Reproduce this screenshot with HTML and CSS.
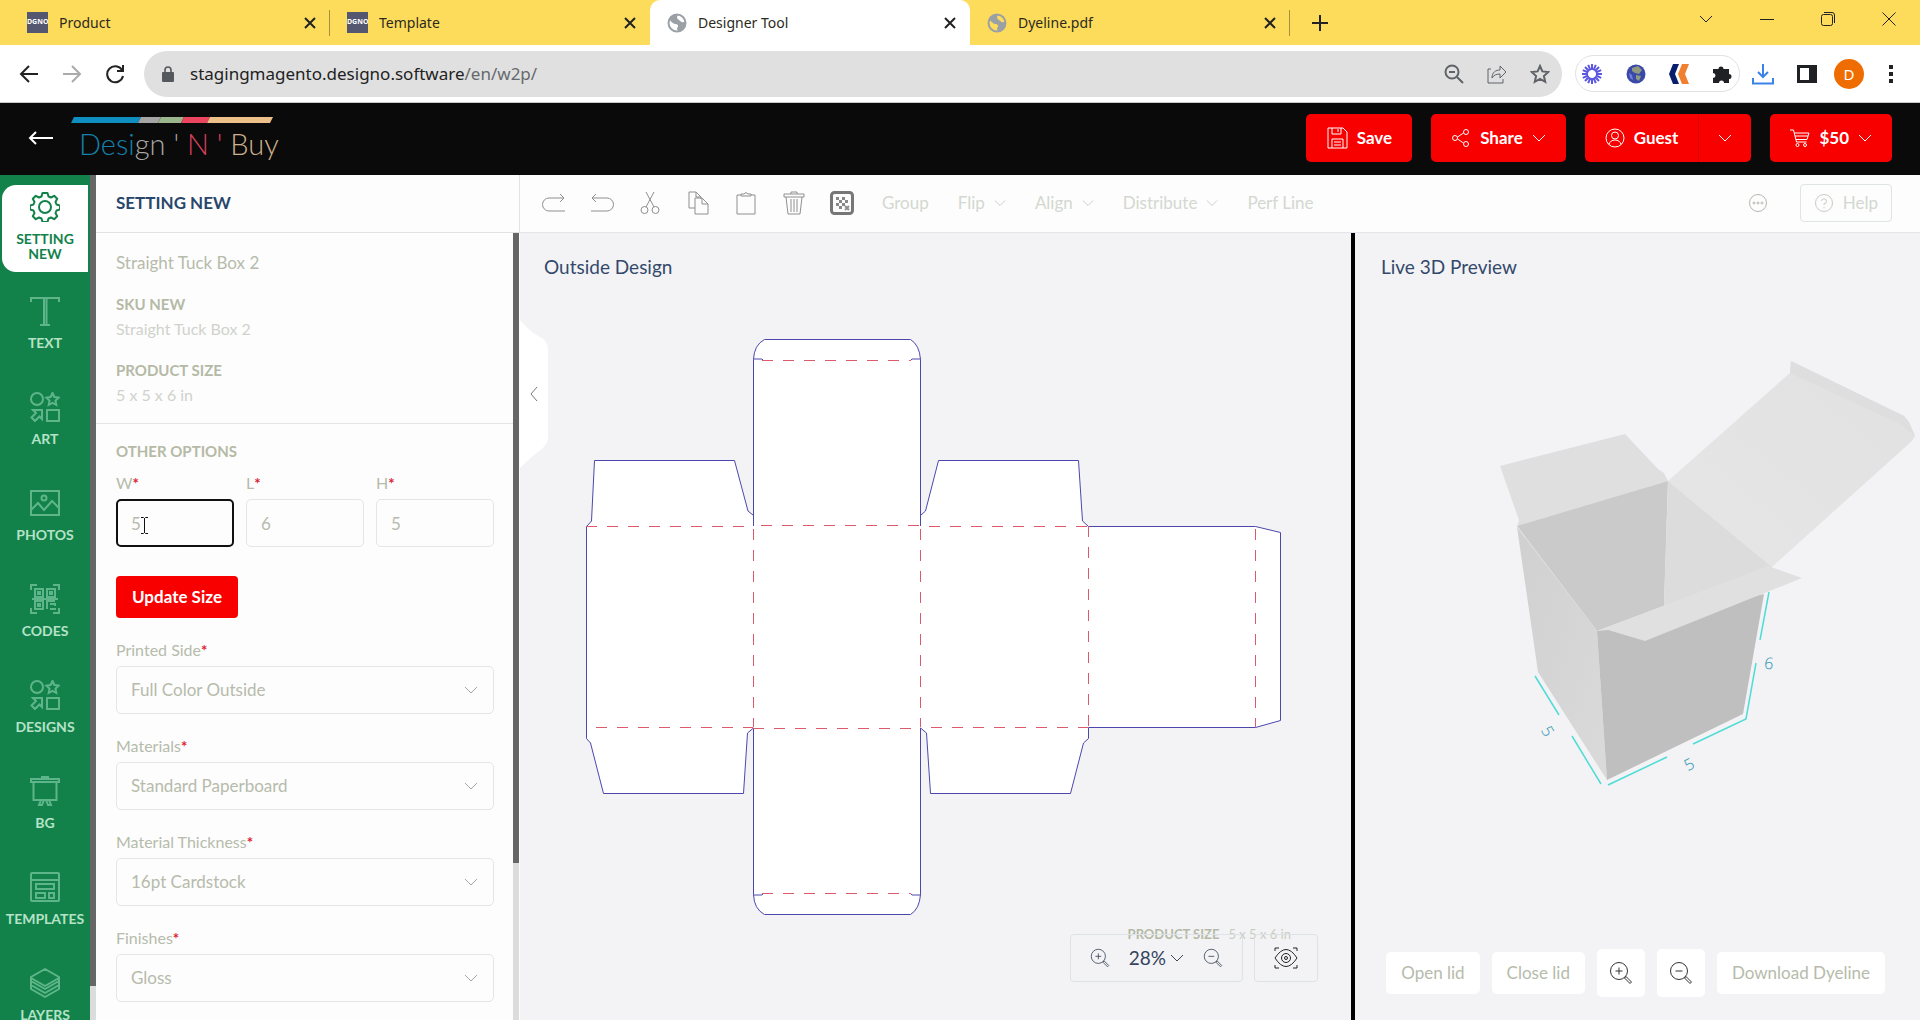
FILE: index.html
```html
<!DOCTYPE html>
<html lang="en">
<head>
<meta charset="utf-8">
<title>Designer Tool</title>
<link rel="stylesheet" href="styles.css">
</head>
<body>
<svg class="defs" aria-hidden="true">
  <symbol id="chev" viewBox="0 0 14 14"><path d="M1 4l6 6 6-6"/></symbol>
  <symbol id="cross" viewBox="0 0 14 14"><path d="M2 2l10 10M12 2L2 12"/></symbol>
  <symbol id="globe" viewBox="0 0 20 20"><circle cx="10" cy="10" r="8.500" fill="none" stroke="#9aa0a6" stroke-width="2"/><path d="M2 6C5 1 9 1 12 1.500 9 3 10 6 12 7s2 3 5 2 2 3 1 5l-3 4c-3 1-5 0-5-3 2-1 1-4-1-4s-4-1-7-5z" fill="#9aa0a6" stroke="none"/></symbol>
  <symbol id="shapes" viewBox="0 0 30 30"><circle cx="7" cy="7" r="6"/><path d="M22.500 1l1.900 4 4.200.600-3.100 3 .800 4.200-3.800-2-3.800 2 .800-4.200-3.100-3 4.200-.600zM17 18h12v11H17zM3 18h9v9l-2.500-2.500L5 29l-3.500-3.500L6 21z"/></symbol>
  <symbol id="zin" viewBox="0 0 24 24"><circle cx="10" cy="10" r="8.500"/><path d="M10 6.500v7M6.500 10h7M15.500 17l1.500-1.500 5.500 5.500-1.500 1.500z"/></symbol>
  <symbol id="zout" viewBox="0 0 24 24"><circle cx="10" cy="10" r="8.500"/><path d="M6.500 10h7M15.500 17l1.500-1.500 5.500 5.500-1.500 1.500z"/></symbol>
</svg>

<div class="app">
  <nav class="tabs" aria-label="Tabs">
    <div class="tab"><span class="fav">DGNO</span><span class="tab-name">Product</span><button class="bare" aria-label="Close tab"><svg class="i14 bold"><use href="#cross"/></svg></button></div>
    <div class="tab"><span class="fav">DGNO</span><span class="tab-name">Template</span><button class="bare" aria-label="Close tab"><svg class="i14 bold"><use href="#cross"/></svg></button></div>
    <div class="tab active"><svg class="i20"><use href="#globe"/></svg><span class="tab-name">Designer Tool</span><button class="bare" aria-label="Close tab"><svg class="i14 bold"><use href="#cross"/></svg></button></div>
    <div class="tab"><svg class="i20"><use href="#globe"/></svg><span class="tab-name">Dyeline.pdf</span><button class="bare" aria-label="Close tab"><svg class="i14 bold"><use href="#cross"/></svg></button></div>
    <button class="bare new-tab" aria-label="New tab"><svg class="i20 bold" viewBox="0 0 20 20"><path d="M10 2v16M2 10h16"/></svg></button>
    <div class="win">
      <button class="bare" aria-label="Search tabs"><svg class="i14"><use href="#chev"/></svg></button>
      <button class="bare" aria-label="Minimize"><svg class="i14" viewBox="0 0 14 14"><path d="M0 7.500h14"/></svg></button>
      <button class="bare" aria-label="Restore"><svg class="i14" viewBox="0 0 14 14"><rect x=".500" y="2.500" width="11" height="11" rx="2"/><path d="M3 .500h8q2.500 0 2.500 2.500v8"/></svg></button>
      <button class="bare" aria-label="Close"><svg class="i14" viewBox="0 0 14 14"><path d="M.500.500l13 13M13.500.500l-13 13"/></svg></button>
    </div>
  </nav>

  <div class="bar">
    <button class="bare" aria-label="Back"><svg class="i20 mid" viewBox="0 0 20 20"><path d="M19 10H2M10 2l-8 8 8 8"/></svg></button>
    <button class="bare fwd" aria-label="Forward"><svg class="i20 mid" viewBox="0 0 20 20"><path d="M1 10h17M10 2l8 8-8 8"/></svg></button>
    <button class="bare" aria-label="Reload"><svg class="i20 bold" viewBox="0 0 20 20"><path d="M17 6a8 8 0 1 0 1 6M18 1v6h-6"/></svg></button>
    <div class="omni">
      <svg class="lock" viewBox="0 0 12 16"><rect y="6" width="12" height="10" rx="1" fill="#55585c" stroke="none"/><path d="M3 7V4a3 3 0 0 1 6 0v3" stroke="#55585c" stroke-width="1.600"/></svg>
      <span class="url">stagingmagento.designo.software<span class="path">/en/w2p/</span></span>
      <svg class="i20 mid" viewBox="0 0 20 20"><circle cx="8" cy="8" r="6.500"/><path d="M5 8h6M13 13l6 6"/></svg>
      <svg class="i20 share" viewBox="0 0 20 20"><path d="M4 5H1v14h15v-4M5 14c0-6 4-8 8-8V2l6 6-6 6v-4c-4 0-6 1-8 4z"/></svg>
      <svg class="i20 mid" viewBox="0 0 20 20"><path d="M10 2l2.400 5.400 5.900.600-4.400 4 1.300 5.800-5.200-3-5.200 3L6.100 12 1.700 8l5.900-.600z"/></svg>
    </div>
    <div class="ext">
      <svg class="i22" viewBox="0 0 22 22" stroke="#5b57e0" stroke-width="2"><path d="M11 1v6M11 15v6M1 11h6M15 11h6M4 4l4.200 4.200M13.800 13.800L18 18M18 4l-4.200 4.200M8.200 13.800L4 18M7.200 1.800l2.300 5.500M12.500 14.700l2.300 5.500M14.800 1.800l-2.300 5.500M9.500 14.700l-2.300 5.500M1.800 7.200l5.500 2.300M14.700 12.500l5.500 2.300M1.800 14.800l5.500-2.300M14.700 9.500l5.500-2.300"/></svg>
      <svg class="i20" viewBox="0 0 20 20" stroke="none"><circle cx="10" cy="10" r="9.500" fill="#3a48a8"/><path d="M6 4l6-2 4 4-3 4-4-1-3-2zM10 11l5 1-2 5-3-2z" fill="#8f9a80"/><path d="M3 9l3 2 1 5-3-2z" fill="#6f80e0"/></svg>
      <svg class="i20" viewBox="0 0 20 20" stroke="none"><path d="M4 0h6L6 10l4 10H4L0 10z" fill="#0a1f6b"/><path d="M13 0h7l-4 10 4 10h-7L9 10z" fill="#f08030"/></svg>
      <svg class="i20" viewBox="0 0 20 20" stroke="none"><path d="M1 5h5.500a2.500 2.500 0 1 1 5 0H17v5a2.500 2.500 0 1 1 0 5V19h-5a2.500 2.500 0 0 0-5 0H1v-5a2.500 2.500 0 0 0 0-5z" fill="#202124"/></svg>
    </div>
    <svg class="i22 bold" viewBox="0 0 22 22" stroke="#3b83e8"><path d="M11 1v13M6 9l5 5 5-5M1 15v5.500h20V15"/></svg>
    <svg class="i20" viewBox="0 0 20 20" stroke="none"><path d="M0 1h20v18H0zM3 4v12h9V4z" fill="#202124" fill-rule="evenodd"/></svg>
    <span class="avatar">D</span>
    <button class="bare" aria-label="Menu"><svg class="dots" viewBox="0 0 4 18" stroke="none"><path d="M0 0h4v4H0zM0 7h4v4H0zM0 14h4v4H0z" fill="#222"/></svg></button>
  </div>

  <header class="top">
    <a href="#" class="back" aria-label="Back"><svg class="i26" viewBox="0 0 26 26"><path d="M25 13H2M8 7l-6 6 6 6"/></svg></a>
    <div class="logo">
      <svg class="stripe" viewBox="0 0 202 6" stroke="none"><path d="M3 0h67l-3 6H0z" fill="#0e8fc0"/><path d="M70 0h20l-3 6H67z" fill="#a5a5a5"/><path d="M90 0h23l-3 6H87z" fill="#9bb58c"/><path d="M113 0h26l-3 6h-26z" fill="#ec4560"/><path d="M139 0h63l-3 6h-63z" fill="#edc08a"/></svg>
      <div class="brand"><span class="c1">Desi</span><span class="c2">gn</span> <span class="c2">'</span> <span class="c3">N</span> <span class="c3">'</span> <span class="c4">Buy</span></div>
    </div>
    <div class="acts">
      <button class="red"><svg class="i22" viewBox="0 0 22 22"><path d="M2 1h15l4 4v16H2zM6 1v6h9V1M6 21v-9h11v9M8 15h7M8 18h7M12 2v3"/></svg>Save</button>
      <button class="red"><svg class="i20" viewBox="0 0 20 20"><circle cx="4" cy="10" r="2.500"/><circle cx="15" cy="4" r="2.500"/><circle cx="15" cy="16" r="2.500"/><path d="M6.500 9l6-4M6.500 11l6 4"/></svg>Share<svg class="i14"><use href="#chev"/></svg></button>
      <div class="split"><button class="red"><svg class="i20" viewBox="0 0 20 20"><circle cx="10" cy="10" r="9"/><circle cx="10" cy="7.500" r="3.500"/><path d="M4 16.500c1-6 11-6 12 0"/></svg>Guest</button><button class="red more" aria-label="Account menu"><svg class="i14"><use href="#chev"/></svg></button></div>
      <button class="red"><svg class="i20" viewBox="0 0 20 20"><path d="M0 2h3.500l3 12h10M4.500 5H19l-2 6.500H6M5 8h13"/><circle cx="7.500" cy="17" r="1.500"/><circle cx="15" cy="17" r="1.500"/></svg>$50<svg class="i14"><use href="#chev"/></svg></button>
    </div>
  </header>

  <div class="work">
    <nav class="side" aria-label="Tools">
      <a href="#" class="tool on"><svg class="i30" viewBox="0 0 30 30"><path d="M12.500 1h5l1 3.500 2.500 1 3.200-1.700 3 3-1.700 3.200 1 2.500 3.500 1v4l-3.500 1-1 2.500 1.700 3.200-3 3-3.200-1.700-2.500 1-1 3.500h-5l-1-3.500-2.500-1-3.200 1.700-3-3 1.700-3.200-1-2.500-3.500-1v-4l3.500-1 1-2.500-1.700-3.200 3-3L9 5.500l2.500-1z" stroke-linejoin="round"/><circle cx="15" cy="15" r="6"/></svg>SETTING<br>NEW</a>
      <a href="#" class="tool"><svg class="i30" viewBox="0 0 30 30"><path d="M1 6V2h28v4M14 2v26M16.500 2v26M10 29h10"/></svg>TEXT</a>
      <a href="#" class="tool"><svg class="i30"><use href="#shapes"/></svg>ART</a>
      <a href="#" class="tool"><svg class="i30" viewBox="0 0 30 30"><rect x="1" y="3" width="28" height="24"/><circle cx="14" cy="10" r="2.500"/><path d="M1 22l7-7 6 7 8-9 7 7"/></svg>PHOTOS</a>
      <a href="#" class="tool"><svg class="i30" viewBox="0 0 30 30"><path d="M1 6V1h6M23 1h6v5M1 24v5h6M23 29h6v-5M5 5h8v8H5zM17 5h8v8h-8zM5 17h8v8H5zM8 8h2v2H8zM20 8h2v2h-2zM8 20h2v2H8zM17 25v-8h8M20 20h5v2M20 25h6M2 15h26"/></svg>CODES</a>
      <a href="#" class="tool"><svg class="i30"><use href="#shapes"/></svg>DESIGNS</a>
      <a href="#" class="tool"><svg class="i30" viewBox="0 0 30 30"><path d="M1 3h28v3H1zM12 3V1h6v2M3.500 6v18h23V6M11 24l-2 5h3l2-5M19 24l2 5h-3l-2-5"/></svg>BG</a>
      <a href="#" class="tool"><svg class="i30" viewBox="0 0 30 30"><rect x="1" y="1" width="28" height="28" rx="1"/><path d="M1 8h28M6 12h18v5H6zM6 21h9v5H6zM19 21h5v5h-5z"/></svg>TEMPLATES</a>
      <a href="#" class="tool"><svg class="i30" viewBox="0 0 30 30"><path d="M15 1l14 8v4l-14 8-14-8V9zM1 10l14 8 14-8M1 13v4l14 8 14-8v-4M1 17v4l14 8 14-8v-4" stroke-linejoin="round"/></svg>LAYERS</a>
    </nav>
    <div class="scroll side-scroll"><div></div></div>

    <section class="panel">
      <h1 class="panel-head">SETTING NEW</h1>
      <div class="panel-row">
        <div class="panel-body">
          <div class="info">
            <p class="name">Straight Tuck Box 2</p>
            <h2>SKU NEW</h2>
            <p class="val">Straight Tuck Box 2</p>
            <h2>PRODUCT SIZE</h2>
            <p class="val">5 x 5 x 6 in</p>
          </div>
          <form class="opts">
            <h2>OTHER OPTIONS</h2>
            <div class="dims">
              <div class="field"><label for="w">W<b>*</b></label><input id="w" class="focus" value="5"><svg class="ibeam" viewBox="0 0 9 17"><path d="M1 .500h2.500l1 1 1-1H8M1 16.500h2.500l1-1 1 1H8M4.500 1v15" stroke="#111"/></svg></div>
              <div class="field"><label for="l">L<b>*</b></label><input id="l" value="6"></div>
              <div class="field"><label for="h">H<b>*</b></label><input id="h" value="5"></div>
            </div>
            <button type="button" class="update">Update Size</button>
            <div class="field"><label for="side">Printed Side<b>*</b></label><div class="sel"><select id="side"><option>Full Color Outside</option></select><svg class="i14"><use href="#chev"/></svg></div></div>
            <div class="field"><label for="mat">Materials<b>*</b></label><div class="sel"><select id="mat"><option>Standard Paperboard</option></select><svg class="i14"><use href="#chev"/></svg></div></div>
            <div class="field"><label for="thick">Material Thickness<b>*</b></label><div class="sel"><select id="thick"><option>16pt Cardstock</option></select><svg class="i14"><use href="#chev"/></svg></div></div>
            <div class="field"><label for="fin">Finishes<b>*</b></label><div class="sel"><select id="fin"><option>Gloss</option></select><svg class="i14"><use href="#chev"/></svg></div></div>
          </form>
        </div>
        <div class="scroll panel-scroll"><div></div></div>
      </div>
    </section>

    <main class="stage">
      <div class="tools">
        <div class="icons">
          <button class="bare" aria-label="Redo"><svg class="i24" viewBox="0 0 24 24"><path d="M23 20H7a6.500 6.500 0 0 1 0-13h15M18 3l4 4-4 4"/></svg></button>
          <button class="bare" aria-label="Undo"><svg class="i24" viewBox="0 0 24 24"><path d="M1 20h16a6.500 6.500 0 0 0 0-13H2M6 3L2 7l4 4"/></svg></button>
          <button class="bare" aria-label="Cut"><svg class="i24" viewBox="0 0 24 24"><circle cx="6.500" cy="19" r="3.500"/><circle cx="17.500" cy="19" r="3.500"/><path d="M8 16l8-15M16 16L8 1"/></svg></button>
          <button class="bare" aria-label="Copy"><svg class="i24" viewBox="0 0 24 24"><path d="M9 17H3V1h7l5 5v2M10 1v5h5M9 7h7l6 6v10H9zM16 7v6h6"/></svg></button>
          <button class="bare" aria-label="Paste"><svg class="i24" viewBox="0 0 24 24"><path d="M7 4H3v19h18V4h-4M7 5h10V3h-3q-2-3-4 0H7z"/></svg></button>
          <button class="bare" aria-label="Delete"><svg class="i24" viewBox="0 0 24 24"><path d="M2 3h20v3H2zM9 3V1h6v2M4 6l2 17h12l2-17M9 8v13M12 8v13M15 8v13"/></svg></button>
          <button class="bare" aria-label="Transparency"><svg class="i24" viewBox="0 0 24 24"><rect x="1.500" y="1.500" width="21" height="21" rx="3" stroke="#777" stroke-width="3"/><path d="M6 6h3v3H6zM12 6h3v3h-3zM9 9h3v3H9zM15 9h3v3h-3zM6 12h3v3H6zM12 12h3v3h-3zM9 15h3v3H9z" fill="#888" stroke="none"/><path d="M15 15l4 4M19 15l-4 4" stroke-width="2"/></svg></button>
        </div>
        <button class="bare word">Group</button>
        <button class="bare word">Flip<svg class="i12"><use href="#chev"/></svg></button>
        <button class="bare word">Align<svg class="i12"><use href="#chev"/></svg></button>
        <button class="bare word">Distribute<svg class="i12"><use href="#chev"/></svg></button>
        <button class="bare word">Perf Line</button>
        <button class="bare end" aria-label="More"><svg class="i20" viewBox="0 0 20 20"><circle cx="10" cy="10" r="8.500"/><circle cx="6" cy="10" r="1"/><circle cx="10" cy="10" r="1"/><circle cx="14" cy="10" r="1"/></svg></button>
        <button class="help"><svg class="i20" viewBox="0 0 20 20"><circle cx="10" cy="10" r="8.500"/><path d="M7.500 8a2.500 2.500 0 1 1 2.500 2.700V12M10 14v1.500"/></svg>Help</button>
      </div>
      <div class="panes">
        <section class="pane flat">
          <h2 class="pane-title">Outside Design</h2>
          <svg class="art" viewBox="520 233 831 787" stroke="#4c47ad">
            <path d="M753.500 526.500V359.500Q754 345 764.500 339.500H910.500Q919.500 345 920.500 359.500V515.500L925.500 511 938.500 460.500H1078.500L1082.500 521 1088.500 526.500H1255.500L1280.500 532.500V720.500L1255.500 727.500H1088.500V738.500L1083.500 743 1070.500 793.500H930.500L926.500 733 920.500 728V894.500Q919.500 909 910.500 914.500H764.500Q754 909 753.500 894.500V728L747.500 733 743.500 793.500H603.500L590.500 743 586.500 738.500V526.500L591.500 521 594.500 460.500H734.500L748 511 753.500 515.500z" fill="#fff" stroke="none"/>
            <path d="M753.500 526V359.500Q754 345 764.500 339.500H910.500Q919.500 345 920.500 359.500V526M920.500 515.500L925.500 511 938.500 460.500H1078.500L1082.500 521 1088.500 526.500H1255.500L1280.500 532.500V720.500L1255.500 727.500H1088.500V738.500L1083.500 743 1070.500 793.500H930.500L926.500 733 920.500 728V894.500Q919.500 909 910.500 914.500H764.500Q754 909 753.500 894.500V728L747.500 733 743.500 793.500H603.500L590.500 743 586.500 738.500V526.500L591.500 521 594.500 460.500H734.500L748 511 753.500 515.500M753 359h9l1 1M921 359h-9l-1 1M753 895h9l1-1M921 895h-9l-1-1" fill="none"/>
            <path class="fold" d="M762 360.500H911M586 526.500H753M761 525.500H920M929 526.500H1088M596 727.500H753M753 728.500H920M931 727.500H1088M762 893.500H911M753.500 529V727M920.500 529V727M1088.500 526V727M1255.500 529V727"/>
          </svg>
          <button class="fold-tab" aria-label="Collapse panel"><svg viewBox="0 0 28 148"><path d="M0 0Q12 14 22 18 28 22 28 30V116Q28 124 22 129 12 136 0 148z" fill="#fff" stroke="none"/><path d="M17 67l-6 7 6 7" stroke="#777"/></svg></button>
          <div class="foot">
            <p class="size"><strong>PRODUCT SIZE</strong>5 x 5 x 6 in</p>
            <div class="foot-row">
              <div class="zoom"><button class="bare" aria-label="Zoom in"><svg class="i20"><use href="#zin"/></svg></button><button class="bare pct">28%<svg class="i14"><use href="#chev"/></svg></button><button class="bare" aria-label="Zoom out"><svg class="i20"><use href="#zout"/></svg></button></div>
              <button class="eye" aria-label="Preview"><svg class="i24" viewBox="0 0 24 24"><path d="M1 5V2h4M19 2h4v3M1 19v3h4M19 22h4v-3M1 12q11-17 22 0-11 17-22 0z"/><circle cx="12" cy="12" r="4.500"/><circle cx="12" cy="12" r="1.500"/></svg></button>
            </div>
          </div>
        </section>
        <section class="pane solid">
          <h2 class="pane-title">Live 3D Preview</h2>
          <svg class="art" viewBox="1355 233 565 787" stroke="none">
            <defs>
              <linearGradient id="g1" x1="0" y1="0" x2="1" y2="1"><stop offset="0" stop-color="#d0d0d0"/><stop offset="1" stop-color="#dadada"/></linearGradient>
              <linearGradient id="g2" x1="0" y1="1" x2="1" y2="0"><stop offset="0" stop-color="#e6e6e6"/><stop offset="1" stop-color="#e1e1e1"/></linearGradient>
            </defs>
            <path d="M1668 481L1790 373 1791 361 1904 416 1909 422 1915 436 1912 441 1772 567z" fill="url(#g2)"/>
            <path d="M1790 373L1791 361 1904 416 1909 422 1915 436 1898 423z" fill="#dedede"/>
            <path d="M1500 466L1625 434 1658 469 1664 473 1668 481 1517 527 1519 520z" fill="#dfdfdf"/>
            <path d="M1517 526L1668 481 1664 606 1597 631z" fill="#cacaca"/>
            <path d="M1668 481L1772 567 1664 606z" fill="#dcdcdc"/>
            <path d="M1517 527L1597 631 1607 780 1538 672z" fill="url(#g1)"/>
            <path d="M1597 631L1764 594 1743 714 1607 780z" fill="#bfbfbf"/>
            <path d="M1597 631L1768 566 1802 578 1645 641 1608 630z" fill="#e0e0e0"/>
            <path d="M1535 676L1559 715M1572 736L1601 784M1608 785L1667 757M1693 744L1746 719 1756 663M1760 640L1769 592" fill="none" stroke="#4fdcd6" stroke-width="1.500"/>
            <g class="dim"><text transform="translate(1548 731) rotate(60)">5</text><text transform="translate(1689 764) rotate(-28)">5</text><text transform="translate(1769 663) rotate(6)">6</text></g>
          </svg>
          <div class="foot3d">
            <button class="chip">Open lid</button>
            <button class="chip">Close lid</button>
            <button class="chip sq" aria-label="Zoom in"><svg class="i24"><use href="#zin"/></svg></button>
            <button class="chip sq" aria-label="Zoom out"><svg class="i24"><use href="#zout"/></svg></button>
            <button class="chip">Download Dyeline</button>
          </div>
        </section>
      </div>
    </main>
  </div>
</div>
</body>
</html>
```
FILE: styles.css
```css
* { box-sizing: border-box; }
body { margin: 0; font-family: Lato, "Liberation Sans", sans-serif; font-size: 17px; line-height: 20px; color: #b6bbab; }
h1, h2, p { margin: 0; }
a { text-decoration: none; color: inherit; }
button, input, select { font: inherit; color: inherit; }
button { cursor: pointer; }
svg { fill: none; display: block; flex: none; }
.defs { position: absolute; width: 0; height: 0; }
.bare { border: 0; padding: 0; background: none; display: flex; align-items: center; }
.i12 { width: 12px; height: 12px; }
.i14 { width: 14px; height: 14px; }
.i20 { width: 20px; height: 20px; }
.i22 { width: 22px; height: 22px; }
.i24 { width: 24px; height: 24px; }
.i26 { width: 26px; height: 26px; }
.i30 { width: 30px; height: 30px; }
.bold { stroke-width: 2; }
.mid { stroke-width: 2; }
.app { height: 100vh; display: flex; flex-direction: column; overflow: hidden; }

/* browser frame */
.tabs { height: 45px; flex: none; display: flex; background: #fddc5c; padding-left: 10px; font-family: "Noto Sans", sans-serif; font-size: 14px; color: #2c2a20; stroke: #222; }
.tab { width: 320px; display: flex; align-items: center; gap: 11px; padding: 0 13px 0 17px; background: linear-gradient(#a98f3c, #a98f3c) right center / 1px 26px no-repeat; }
.tab:nth-child(2) { background: none; }
.tab.active { background: #fff; border-radius: 10px 10px 0 0; }
.tab-name { flex: 1; }
.fav { width: 21px; height: 21px; background: #55566f; color: #fff; font-size: 7px; line-height: 19px; font-weight: 700; text-align: center; overflow: hidden; }
.new-tab { margin-left: 20px; }
.win { margin-left: auto; display: flex; gap: 47px; padding: 0 24px 7px 0; align-items: center; }
.bar { height: 58px; flex: none; display: flex; align-items: center; padding: 0 27px 0 19px; background: #fff; border-bottom: 1px solid #c8c8c8; stroke: #222; gap: 23px; font-family: "Noto Sans", sans-serif; }
.fwd { stroke: #aaa; }
.omni { flex: 1; height: 46px; margin-left: -4px; border-radius: 23px; background: #e0e0e0; display: flex; align-items: center; padding: 0 12px 0 18px; gap: 23px; stroke: #5f6368; }
.lock { width: 12px; height: 16px; }
.url { flex: 1; margin-left: -7px; font-size: 17px; color: #222; }
.path { color: #66696d; }
.ext { height: 37px; display: flex; align-items: center; gap: 23px; border: 1px solid #dfe1e5; border-radius: 19px; padding: 0 7px 0 5px; margin: 0 -11px 0 -10px; }
.avatar { width: 30px; height: 30px; margin: 0 2px 0 -6px; border-radius: 50%; background: #ee6c00; color: #fff; text-align: center; line-height: 30px; font-size: 15px; }
.dots { width: 4px; height: 18px; }

/* product header */
.top { height: 72px; flex: none; display: flex; align-items: center; background: #0a0a0a; padding: 0 28px 2px; color: #fff; stroke: #fff; }
.back { stroke-width: 2; }
.logo { margin-left: 17px; height: 72px; padding-top: 15px; }
.stripe { width: 202px; height: 6px; }
.brand { font-weight: 300; font-size: 29px; line-height: 42px; padding-left: 8px; white-space: nowrap; }
.c1 { color: #1480ab; }
.c2 { color: #a8a8a4; }
.c3 { color: #d8405c; }
.c4 { color: #cdb08c; }
.acts { margin-left: auto; display: flex; gap: 19px; }
.red { height: 48px; display: flex; align-items: center; gap: 9px; border: 0; border-radius: 5px; background: #f80000; color: #fff; font-weight: 700; padding: 0 20px; }
.split { display: flex; }
.split .red:first-child { border-radius: 5px 0 0 5px; }
.split .more { padding: 0 19px; border-radius: 0 5px 5px 0; border-left: 1px solid #d80000; }

/* work area */
.work { flex: 1; min-height: 0; display: grid; grid-template-columns: 90px 6px 424px minmax(0, 1fr); }
.work > * { min-height: 0; }
.side { background: #12824a; padding: 10px 2px 0; display: flex; flex-direction: column; gap: 17px; overflow: hidden; font-size: 14px; line-height: 15px; font-weight: 700; color: #b5e3c8; stroke: #5fb58a; }
.tool { flex: none; min-height: 79px; padding: 7px 0 11px; text-align: center; stroke-width: 2; }
.tool svg { margin: 0 auto 9px; }
.tool.on { background: #fff; color: #12824a; stroke: #12824a; border-radius: 14px 0 0 14px; }
.scroll { background: #dcdcdc; }
.scroll div { background: #666; }
.side-scroll div { height: 96%; }
.panel { display: flex; flex-direction: column; background: #fdfdfd; }
.panel-head { height: 58px; flex: none; border-bottom: 1px solid #dfe3e6; border-right: 1px solid #dfe3e6; padding-left: 20px; font-size: 17px; line-height: 56px; color: #29466b; }
.panel-row { flex: 1; min-height: 0; display: flex; }
.panel-body { flex: 1; overflow: hidden; }
.panel-scroll { width: 6px; margin-right: 1px; }
.panel-scroll div { height: 80%; }
.panel h2 { font-size: 15px; font-weight: 700; color: #b5baa6; }
.info { height: 191px; padding: 20px 20px 0; border-bottom: 1px solid #e2e4e6; }
.name { margin-bottom: 21px; }
.val { margin: 5px 0 21px; font-size: 16px; color: #d0d2cc; }
.opts { padding: 17px 19px 0 20px; display: flex; flex-direction: column; align-items: stretch; }
.dims { display: grid; grid-template-columns: repeat(3, 1fr); gap: 12px; margin-top: 12px; }
.field { position: relative; }
.field label { display: block; font-size: 16px; margin-bottom: 6px; }
.field b { color: #e02030; font-size: 15px; }
.opts > .field { margin-bottom: 22px; }
input, select { width: 100%; height: 48px; border: 1px solid #e4e6e6; border-radius: 5px; background: transparent; padding: 0 14px; }
input.focus { border: 2px solid #111; padding: 0 13px; outline: 0; }
.ibeam { position: absolute; left: 24px; bottom: 13px; width: 9px; height: 17px; }
.update { align-self: flex-start; height: 42px; margin: 29px 0 22px; padding: 0 16px; border: 0; border-radius: 4px; background: #f80000; color: #fff; font-weight: 700; }
.sel { display: grid; align-items: center; }
.sel > * { grid-area: 1 / 1; }
.sel select { appearance: none; }
.sel svg { justify-self: end; margin-right: 16px; stroke: #a5a8a0; pointer-events: none; }

/* stage */
.stage { display: flex; flex-direction: column; background: #f3f3f6; }
.tools { height: 58px; flex: none; display: flex; align-items: center; background: #fdfdfd; border-bottom: 1px solid #e2e5ea; padding: 0 28px 1px 22px; color: #d3d8d0; stroke: #8f8f8f; }
.icons { display: flex; gap: 24px; margin-right: 28px; }
.word { gap: 9px; margin-right: 29px; stroke: #c4c8c2; }
.end { margin-left: auto; stroke: #b4b8ae; }
.help { height: 38px; margin-left: 32px; padding: 0 13px; display: flex; align-items: center; gap: 9px; background: none; border: 1px solid #dfe4e4; border-radius: 4px; stroke: #c8ccc4; }
.panes { flex: 1; min-height: 0; display: grid; grid-template-columns: 831fr 569fr; }
.pane { position: relative; min-height: 0; display: grid; grid-template: minmax(0, 1fr) / minmax(0, 1fr); }
.pane > * { grid-area: 1 / 1; }
.pane-title { align-self: start; padding: 24px 24px 0; font-size: 19px; font-weight: 400; color: #33496b; }
.solid { border-left: 4px solid #000; }
.solid .pane-title { padding-left: 26px; }
.art { width: 100%; height: 100%; }
.fold { stroke: #dc5a6c; stroke-dasharray: 11 10; }
.fold-tab { align-self: start; justify-self: start; margin-top: 87px; border: 0; padding: 0; background: none; }
.fold-tab svg { width: 28px; height: 148px; }
.foot { align-self: end; justify-self: end; padding: 0 33px 38px 0; }
.size { height: 10px; padding-right: 27px; text-align: right; font-size: 13px; color: #c8cdc2; }
.size strong { margin-right: 9px; color: #b5baa6; }
.foot-row { display: flex; gap: 11px; stroke: #3a4656; color: #33445c; }
.zoom { height: 48px; display: flex; align-items: center; gap: 19px; padding: 0 19px; border: 1px solid #dde2e4; border-radius: 4px; }
.pct { font-size: 19px; gap: 4px; }
.eye { width: 64px; height: 48px; display: flex; align-items: center; justify-content: center; background: none; border: 1px solid #dde2e4; border-radius: 4px; stroke: #222; }
.foot3d { align-self: end; justify-self: end; display: flex; align-items: center; gap: 12px; padding: 0 35px 23px 0; stroke: #333; }
.chip { height: 42px; padding: 0 15px; border: 0; border-radius: 5px; background: #fff; }
.chip.sq { width: 48px; height: 48px; padding: 0 12px; }
.dim { font-family: "Noto Sans", sans-serif; font-size: 16px; font-weight: 300; fill: #3a9db5; text-anchor: middle; dominant-baseline: central; }
```
